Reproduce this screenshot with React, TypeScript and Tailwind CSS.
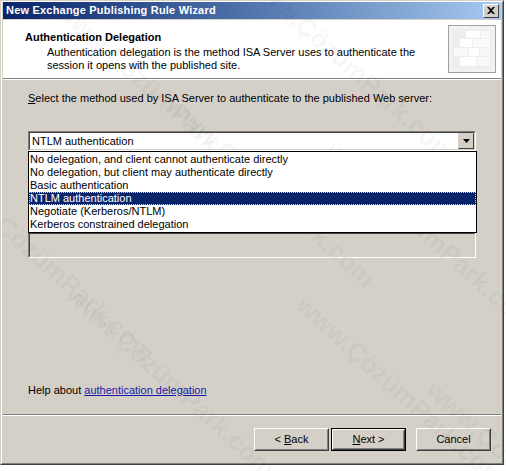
import React from "react";

const items = [
  "No delegation, and client cannot authenticate directly",
  "No delegation, but client may authenticate directly",
  "Basic authentication",
  "NTLM authentication",
  "Negotiate (Kerberos/NTLM)",
  "Kerberos constrained delegation",
];

const SELECTED = 3;

function HeaderIcon() {
  return (
    <svg width="48" height="48" viewBox="0 0 48 48">
      <rect x="0.5" y="0.5" width="47" height="47" fill="#f2f2f2" stroke="#a0a0a0" />
      <rect x="4" y="4" width="40" height="40" fill="#eeeeee" />
      <rect x="18" y="6" width="14" height="7" fill="#ffffff" />
      <rect x="33" y="6" width="9" height="7" fill="#f8f8f8" />
      <rect x="12" y="14" width="12" height="8" fill="#ffffff" />
      <rect x="25" y="14" width="17" height="8" fill="#fafafa" />
      <rect x="6" y="23" width="14" height="8" fill="#f9f9f9" />
      <rect x="21" y="23" width="10" height="8" fill="#ffffff" />
      <rect x="32" y="23" width="10" height="8" fill="#f6f6f6" />
      <rect x="12" y="32" width="16" height="9" fill="#ffffff" />
      <rect x="29" y="32" width="13" height="9" fill="#f8f8f8" />
    </svg>
  );
}

function Button({ children, primary }: { children: React.ReactNode; primary?: boolean }) {
  return (
    <div className={primary ? "border border-black" : ""}>
      <div
        className={
          "flex items-center justify-center bg-[#d4d0c8] border border-t-white border-l-white border-r-[#404040] border-b-[#404040] " +
          (primary ? "w-[73px] h-[21px]" : "w-[75px] h-[23px]")
        }
      >
        <div className="w-full h-full flex items-center justify-center border border-transparent border-r-[#808080] border-b-[#808080]">
          {children}
        </div>
      </div>
    </div>
  );
}

export default function App() {
  // site stamp repeated across the dialog
  const marks = [
    { x: 60, y: 0 },
    { x: 250, y: -30 },
    { x: 170, y: 95 },
    { x: -50, y: 170 },
    { x: 330, y: 140 },
    { x: 70, y: 285 },
    { x: 300, y: 295 },
    { x: 430, y: 380 },
  ];

  return (
    <div
      className="relative w-[506px] h-[471px] bg-white overflow-hidden text-[11px] text-black leading-[13px]"
      style={{ fontFamily: '"Liberation Sans", Arial, sans-serif' }}
    >
      {/* window frame */}
      <div className="w-[504px] h-[465px] border border-t-[#d4d0c8] border-l-[#d4d0c8] border-r-[#404040] border-b-[#404040] bg-[#d4d0c8]">
        <div className="w-full h-full border border-t-white border-l-white border-r-[#808080] border-b-[#808080] flex flex-col px-px">
          {/* title bar */}
          <div className="h-[17px] flex items-center justify-between bg-gradient-to-r from-[#0a246a] to-[#a6caf0] pl-[3px] pr-[2px]">
            <span className="text-white font-bold text-[11px] tracking-[0.2px]">
              New Exchange Publishing Rule Wizard
            </span>
            <div className="w-[16px] h-[14px] bg-[#d4d0c8] border border-t-white border-l-white border-r-[#404040] border-b-[#404040] flex items-center justify-center">
              <svg width="8" height="7" viewBox="0 0 8 7">
                <path d="M0 0h2l2 2 2-2h2L5 3.5 8 7H6L4 5 2 7H0l3-3.5z" fill="#000" />
              </svg>
            </div>
          </div>

          {/* wizard header */}
          <div className="mt-px h-[59px] bg-white flex justify-between border-b border-b-[#808080]">
            <div className="pl-[22px] pt-[11px]">
              <div className="font-bold">Authentication Delegation</div>
              <div className="pl-[22px] pt-[2px]">
                Authentication delegation is the method ISA Server uses to authenticate the
                <br />
                session it opens with the published site.
              </div>
            </div>
            <div className="pt-[5px] pr-[5px]">
              <HeaderIcon />
            </div>
          </div>
          <div className="h-px bg-white" />

          {/* body */}
          <div className="flex-1 flex flex-col pl-[25px] pr-[25px]">
            <div className="pt-[12px]">
              <span className="underline">S</span>elect the method used by ISA Server to authenticate to
              the published Web server:
            </div>

            {/* combo box */}
            <div className="mt-[26px] w-[448px] h-[20px] border border-t-[#808080] border-l-[#808080] border-r-white border-b-white">
              <div className="w-full h-full bg-white border border-t-[#404040] border-l-[#404040] border-r-[#d4d0c8] border-b-[#d4d0c8] flex items-center justify-between">
                <span className="pl-[2px]">NTLM authentication</span>
                <div className="w-[16px] h-[16px] bg-[#d4d0c8] border border-t-[#d4d0c8] border-l-[#d4d0c8] border-r-[#404040] border-b-[#404040] flex items-center justify-center">
                  <svg width="7" height="4" viewBox="0 0 7 4">
                    <path d="M0 0h7L3.5 4z" fill="#000" />
                  </svg>
                </div>
              </div>
            </div>

            {/* open list + the box under it */}
            <div className="relative w-[448px]">
              <div className="h-[26px] mt-[81px] border border-t-[#808080] border-l-[#808080] border-r-white border-b-white">
                <div className="w-full h-full border border-t-[#404040] border-l-[#404040] border-r-[#d4d0c8] border-b-[#d4d0c8]" />
              </div>
              <div className="absolute left-0 top-0 w-[449px] bg-white border border-black py-px z-10">
                {items.map((it, i) => (
                  <div
                    key={it}
                    className={
                      "h-[13px] pl-[1px] leading-[13px] " +
                      (i === SELECTED
                        ? "bg-[#0a246a] text-white outline outline-1 outline-dotted outline-[#d4d0c8] -outline-offset-1"
                        : "")
                    }
                  >
                    {it}
                  </div>
                ))}
              </div>
            </div>

            <div className="mt-auto mb-[17px]">
              Help about{" "}
              <span className="text-[#1a1aa6] underline">authentication delegation</span>
            </div>
          </div>

          {/* footer */}
          <div className="h-px bg-[#808080]" />
          <div className="h-px bg-white" />
          <div className="h-[47px] flex items-start justify-end pt-[12px] pr-[10px]">
            <Button>
              &lt; <span className="underline ml-[3px]">B</span>ack
            </Button>
            <div className="ml-[2px]">
              <Button primary>
                <span className="underline">N</span>ext &gt;
              </Button>
            </div>
            <div className="ml-[10px]">
              <Button>Cancel</Button>
            </div>
          </div>
        </div>
      </div>

      {/* watermark */}
      <div className="pointer-events-none absolute inset-0">
        {marks.map((m, i) => (
          <div
            key={i}
            className="absolute text-[26px] font-bold text-black/[0.05] whitespace-nowrap rotate-[42deg] origin-left"
            style={{ left: m.x, top: m.y }}
          >
            www.ÇözümPark.com
          </div>
        ))}
      </div>
    </div>
  );
}
